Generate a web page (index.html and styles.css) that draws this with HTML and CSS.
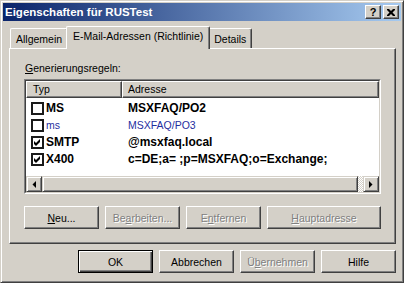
FILE: index.html
```html
<!DOCTYPE html>
<html>
<head>
<meta charset="utf-8">
<link rel="stylesheet" href="styles.css">
</head>
<body>
<div class="window">
  <div class="titlebar">
    <span class="title">Eigenschaften für RUSTest</span>
    <div class="capbtns">
      <span class="capbtn help">?</span>
      <span class="capbtn close"><svg width="8" height="7" viewBox="0 0 8 7"><path d="M0 0h2l2 2l2-2h2v1l-2.5 2.5l2.5 2.5v1h-2l-2-2l-2 2h-2v-1l2.5-2.5l-2.5-2.5z" fill="#000"/></svg></span>
    </div>
  </div>
  <div class="client">
    <div class="tabs">
      <div class="tab">Allgemein</div>
      <div class="tab active">E-Mail-Adressen (Richtlinie)</div>
      <div class="tab">Details</div>
    </div>
    <div class="panel">
      <div class="label"><u>G</u>enerierungsregeln:</div>
      <div class="list">
        <div class="listin">
          <div class="hdr">
            <div class="hc c1">Typ</div>
            <div class="hc c2">Adresse</div>
          </div>
          <div class="rows">
            <div class="row bold">
              <div class="c1"><span class="cb"></span>MS</div>
              <div class="c2">MSXFAQ/PO2</div>
            </div>
            <div class="row blue">
              <div class="c1"><span class="cb"></span>ms</div>
              <div class="c2">MSXFAQ/PO3</div>
            </div>
            <div class="row bold">
              <div class="c1"><span class="cb"><svg class="chk" width="7" height="7" viewBox="0 0 7 7"><path d="M0 2L2 4L6 0V3L2 7L0 5Z" fill="#000"/></svg></span>SMTP</div>
              <div class="c2">@msxfaq.local</div>
            </div>
            <div class="row bold">
              <div class="c1"><span class="cb"><svg class="chk" width="7" height="7" viewBox="0 0 7 7"><path d="M0 2L2 4L6 0V3L2 7L0 5Z" fill="#000"/></svg></span>X400</div>
              <div class="c2">c=DE;a= ;p=MSXFAQ;o=Exchange;</div>
            </div>
          </div>
          <div class="spacer"></div>
          <div class="hscroll">
            <div class="sbtn"><svg width="4" height="7" viewBox="0 0 4 7"><path d="M4 0V7L0.5 3.5Z" fill="#000"/></svg></div>
            <div class="thumb"></div>
            <div class="track"></div>
            <div class="sbtn"><svg width="4" height="7" viewBox="0 0 4 7"><path d="M0 0V7L3.5 3.5Z" fill="#000"/></svg></div>
          </div>
        </div>
      </div>
      <div class="btnrow">
        <div class="btn"><u>N</u>eu...</div>
        <div class="btn disabled">Be<u>a</u>rbeiten...</div>
        <div class="btn disabled">E<u>n</u>tfernen</div>
        <div class="btn disabled wide"><u>H</u>auptadresse</div>
      </div>
    </div>
    <div class="dlgrow">
      <div class="btn default">OK</div>
      <div class="btn">Abbrechen</div>
      <div class="btn disabled">Ü<u>b</u>ernehmen</div>
      <div class="btn">Hilfe</div>
    </div>
  </div>
</div>
</body>
</html>
```
FILE: styles.css
```css
html, body {
  margin: 0;
  padding: 0;
  background: #D4D0C8;
}
body {
  font-family: "Liberation Sans", Arial, sans-serif;
  font-size: 10.5px;
  color: #000;
}
.window {
  width: 404px;
  height: 283px;
  box-sizing: border-box;
  border: 1px solid;
  border-color: #D4D0C8 #404040 #404040 #D4D0C8;
  box-shadow: inset 1px 1px #fff, inset -1px -1px #808080;
  padding: 2px;
  display: flex;
  flex-direction: column;
  background: #D4D0C8;
}
.titlebar {
  height: 18px;
  flex: none;
  display: flex;
  align-items: center;
  background: linear-gradient(to right, #0A246A, #A6CAF0);
  padding: 0 2px 0 2px;
}
.title {
  flex: 1;
  color: #fff;
  font-weight: bold;
  font-size: 11.5px;
  line-height: 18px;
  white-space: nowrap;
}
.capbtns {
  display: flex;
  gap: 2px;
}
.capbtn {
  width: 16px;
  height: 14px;
  box-sizing: border-box;
  background: #D4D0C8;
  border: 1px solid;
  border-color: #fff #404040 #404040 #fff;
  box-shadow: inset -1px -1px #808080;
  display: flex;
  align-items: center;
  justify-content: center;
}
.help {
  font-weight: bold;
  font-size: 11px;
  line-height: 12px;
}
.client {
  flex: 1;
  display: flex;
  flex-direction: column;
  padding: 5px 5px 0 6px;
}
.tabs {
  height: 22px;
  flex: none;
  display: flex;
  align-items: flex-end;
  padding-left: 1px;
}
.tab {
  height: 20px;
  box-sizing: border-box;
  padding: 4px 5px 0 5px;
  line-height: 13px;
  border-top: 1px solid #fff;
  border-left: 1px solid #fff;
  border-right: 1px solid #404040;
  box-shadow: inset -1px 0 #808080;
  border-radius: 2px 2px 0 0;
  white-space: nowrap;
  background: #D4D0C8;
}
.tab.active {
  height: 23px;
  margin: 0 -2px -1px -2px;
  padding: 3px 6px 0 6px;
  position: relative;
  z-index: 1;
}
.panel {
  height: 196px;
  flex: none;
  box-sizing: border-box;
  border: 1px solid;
  border-color: #fff #404040 #404040 #fff;
  box-shadow: inset -1px -1px #808080;
  padding: 13px 0 0 14px;
  display: flex;
  flex-direction: column;
}
.label {
  line-height: 13px;
  margin-left: 1px;
}
.list {
  margin-top: 4px;
  width: 357px;
  height: 115px;
  box-sizing: border-box;
  border: 1px solid;
  border-color: #808080 #fff #fff #808080;
}
.listin {
  height: 100%;
  box-sizing: border-box;
  border: 1px solid;
  border-color: #404040 #D4D0C8 #D4D0C8 #404040;
  background: #fff;
  display: flex;
  flex-direction: column;
  overflow: hidden;
}
.hdr {
  display: flex;
  height: 17px;
  flex: none;
}
.hc {
  height: 17px;
  box-sizing: border-box;
  border: 1px solid;
  border-color: #fff #404040 #404040 #fff;
  box-shadow: inset -1px -1px #808080;
  background: #D4D0C8;
  line-height: 14px;
  white-space: nowrap;
}
.hc.c1 {
  width: 96px;
  flex: none;
  padding-left: 6px;
}
.hc.c2 {
  flex: 1;
  padding-left: 5px;
}
.rows {
  padding-top: 2px;
  display: flex;
  flex-direction: column;
}
.row {
  display: flex;
  height: 17px;
  line-height: 17px;
  flex: none;
  white-space: nowrap;
}
.row .c1 {
  width: 96px;
  flex: none;
  padding-left: 5px;
  box-sizing: border-box;
  display: flex;
  align-items: center;
}
.row .c2 {
  padding-left: 6px;
}
.bold {
  font-weight: bold;
  font-size: 12px;
}
.blue {
  color: #1F2F9F;
}
.cb {
  width: 13px;
  height: 13px;
  box-sizing: border-box;
  border: 2px solid #1a1a1a;
  background: #fff;
  margin-right: 2px;
  display: flex;
  align-items: center;
  justify-content: center;
  flex: none;
}
.chk {
  display: block;
}
.spacer {
  flex: 1;
}
.hscroll {
  height: 16px;
  flex: none;
  display: flex;
}
.sbtn, .thumb {
  height: 16px;
  box-sizing: border-box;
  background: #D4D0C8;
  border: 1px solid;
  border-color: #D4D0C8 #404040 #404040 #D4D0C8;
  box-shadow: inset 1px 1px #fff, inset -1px -1px #808080;
}
.sbtn {
  width: 16px;
  flex: none;
  display: flex;
  align-items: center;
  justify-content: center;
}
.thumb {
  width: 316px;
  flex: none;
}
.track {
  flex: 1;
  background: repeating-conic-gradient(#fff 0 25%, #D4D0C8 0 50%) 0 0 / 2px 2px;
}
.btnrow {
  margin-top: 12px;
  display: flex;
  gap: 6px;
}
.btn {
  width: 75px;
  height: 23px;
  box-sizing: border-box;
  flex: none;
  background: #D4D0C8;
  border: 1px solid;
  border-color: #fff #404040 #404040 #fff;
  box-shadow: inset -1px -1px #808080;
  display: flex;
  align-items: center;
  justify-content: center;
  white-space: nowrap;
}
.btn.wide {
  width: 114px;
}
.btn.default {
  border: 1px solid #000;
  box-shadow: inset 1px 1px #fff, inset -1px -1px #404040, inset -2px -2px #808080;
}
.btn.disabled {
  color: #808080;
  text-shadow: 1px 1px #fff;
}
.dlgrow {
  margin-top: 6px;
  display: flex;
  justify-content: flex-end;
  gap: 6px;
}
```
